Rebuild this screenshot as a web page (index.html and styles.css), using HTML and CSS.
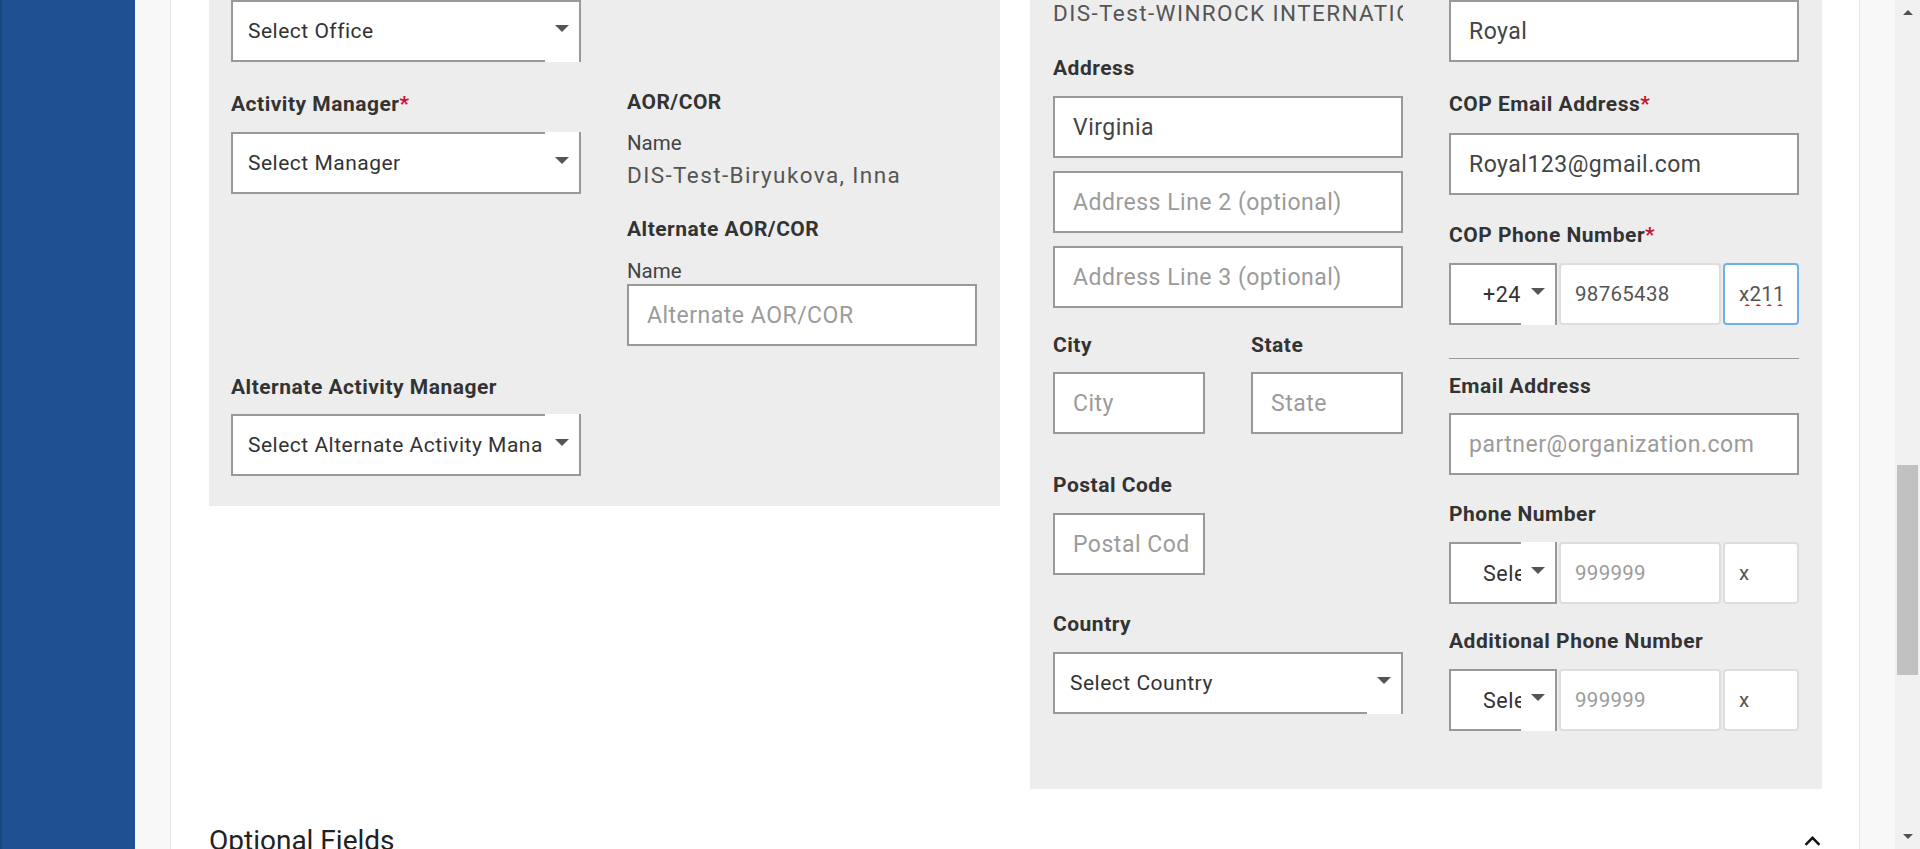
FILE: index.html
```html
<!DOCTYPE html>
<html lang="en">
<head>
<meta charset="utf-8">
<title>Activity Form</title>
<link rel="stylesheet" href="styles.css">
</head>
<body>
<div class="app">
  <aside class="sidebar"></aside>
  <main class="main">
    <div class="card">
      <div class="panels">
        <section class="panel panel-left">
          <div class="row">
            <div class="col">
              <div class="select sel-bottom"><span class="select-text">Select Office</span><span class="caret-box"><span class="caret"></span></span></div>
            </div>
          </div>
          <div class="row row-2">
            <div class="col">
              <label class="label label-manager">Activity Manager<span class="req">*</span></label>
              <div class="select sel-top"><span class="select-text">Select Manager</span><span class="caret-box"><span class="caret"></span></span></div>
            </div>
            <div class="col">
              <h4 class="label label-plain">AOR/COR</h4>
              <div class="sublabel">Name</div>
              <div class="static static-name">DIS-Test-Biryukova, Inna</div>
              <h4 class="label label-plain label-alt">Alternate AOR/COR</h4>
              <div class="sublabel sublabel-alt">Name</div>
              <input class="input input-alt" type="text" placeholder="Alternate AOR/COR">
            </div>
          </div>
          <div class="row row-3">
            <div class="col">
              <label class="label">Alternate Activity Manager</label>
              <div class="select sel-top"><span class="select-text">Select Alternate Activity Manager</span><span class="caret-box"><span class="caret"></span></span></div>
            </div>
          </div>
        </section>

        <section class="panel panel-right">
          <div class="col">
            <div class="static static-org">DIS-Test-WINROCK INTERNATIONAL</div>
            <label class="label label-address">Address</label>
            <input class="input" type="text" value="Virginia">
            <input class="input input-next" type="text" placeholder="Address Line 2 (optional)">
            <input class="input input-next" type="text" placeholder="Address Line 3 (optional)">
            <div class="pair">
              <div class="pair-item">
                <label class="label label-pair">City</label>
                <input class="input" type="text" placeholder="City">
              </div>
              <div class="pair-item">
                <label class="label label-pair">State</label>
                <input class="input" type="text" placeholder="State">
              </div>
            </div>
            <div class="pair pair-single">
              <div class="pair-item">
                <label class="label">Postal Code</label>
                <input class="input" type="text" placeholder="Postal Code">
              </div>
            </div>
            <label class="label label-country">Country</label>
            <div class="select sel-bottom"><span class="select-text">Select Country</span><span class="caret-box"><span class="caret"></span></span></div>
          </div>

          <div class="col">
            <input class="input" type="text" value="Royal">
            <label class="label label-cop-email">COP Email Address<span class="req">*</span></label>
            <input class="input" type="text" value="Royal123@gmail.com">
            <label class="label label-cop-phone">COP Phone Number<span class="req">*</span></label>
            <div class="phone">
              <div class="select phone-sel sel-bottom"><span class="select-text">+24</span><span class="caret-box"><span class="caret"></span></span></div>
              <input class="input input-soft phone-num" type="text" value="98765438">
              <input class="input input-soft input-focus phone-ext" type="text" value="x211">
            </div>
            <hr class="divider">
            <label class="label label-email">Email Address</label>
            <input class="input" type="text" placeholder="partner@organization.com">
            <label class="label label-phone">Phone Number</label>
            <div class="phone">
              <div class="select phone-sel sel-top"><span class="select-text">Select</span><span class="caret-box"><span class="caret"></span></span></div>
              <input class="input input-soft phone-num" type="text" placeholder="999999">
              <input class="input input-soft phone-ext" type="text" placeholder="x">
            </div>
            <label class="label label-add-phone">Additional Phone Number</label>
            <div class="phone">
              <div class="select phone-sel sel-bottom"><span class="select-text">Select</span><span class="caret-box"><span class="caret"></span></span></div>
              <input class="input input-soft phone-num" type="text" placeholder="999999">
              <input class="input input-soft phone-ext" type="text" placeholder="x">
            </div>
          </div>
        </section>
      </div>

      <div class="optional">
        <h3 class="optional-title">Optional Fields</h3>
        <svg class="chevron" width="17" height="10" viewBox="0 0 17 10" aria-hidden="true"><polyline points="1.5,8.8 8.5,1.8 15.5,8.8" fill="none" stroke="#111" stroke-width="2.4"/></svg>
      </div>
    </div>
  </main>
  <div class="scrollbar">
    <div class="sb-btn"><span class="sb-up"></span></div>
    <div class="sb-track"><div class="sb-thumb"></div></div>
    <div class="sb-btn"><span class="sb-down"></span></div>
  </div>
</div>
</body>
</html>
```

FILE: styles.css
```css
* { box-sizing: border-box; }
html, body { margin: 0; padding: 0; }
body {
  font-family: Roboto, "Liberation Sans", Arial, sans-serif;
  color: #333;
  background: #f8f8f8;
  overflow: hidden;
}
.app { display: flex; height: 849px; overflow: hidden; }

.sidebar {
  width: 135px;
  flex: none;
  background: #1f5190;
  border-left: 2px solid #1a467e;
}

.main {
  flex: 1;
  min-width: 0;
  background: #f8f8f8;
  padding: 0 35px;
  display: flex;
}
.card {
  flex: 1;
  min-width: 0;
  background: #fff;
  border-left: 1px solid #e6e6e6;
  border-right: 1px solid #e6e6e6;
  padding: 0 37px 0 38px;
}

.panels { display: flex; gap: 30px; align-items: flex-start; }
.panel { background: #ededed; }
.panel-left { width: 791px; flex: none; padding: 0 23px 30px 22px; }
.panel-right { width: 792px; flex: none; padding: 0 23px 58px 23px; display: flex; gap: 46px; }

.row { display: flex; gap: 46px; }
.row-2 { margin-top: 26px; }
.row-3 { margin-top: 27px; }
.col { width: 350px; flex: none; min-width: 0; display: flex; flex-direction: column; }

.label {
  display: block;
  margin: 0 0 16px;
  font-size: 21px;
  line-height: 28px;
  font-weight: 700;
  letter-spacing: .5px;
  color: #333;
}
.label-plain { margin-bottom: 0; }
.label-manager { margin-top: 2px; margin-bottom: 14px; }
.req { color: #c8102e; font-weight: 700; letter-spacing: 0; }
.row-3 .label { margin-bottom: 13px; }

.sublabel {
  margin-top: 14px;
  font-size: 20.5px;
  line-height: 26px;
  color: #444;
}
.sublabel-alt { margin-top: 15px; }
.label-alt { margin-top: 25px; }
.input-alt { margin-top: 5px; }

.static {
  font-size: 22.5px;
  letter-spacing: 1.4px;
  color: #555;
  white-space: nowrap;
  overflow: hidden;
}
.static-name { margin-top: 4px; line-height: 30px; }
.static-org { line-height: 26px; }

.select {
  position: relative;
  height: 62px;
  border: 2px solid #999;
  background: #fff;
  display: flex;
  align-items: center;
  padding: 0 36px 0 15px;
  font-size: 21px;
  letter-spacing: .5px;
  color: #333;
}
.select-text { white-space: nowrap; overflow: hidden; }
.caret-box {
  position: absolute;
  right: 0;
  width: 34px;
  background: #fff;
  display: flex;
  justify-content: center;
  align-items: flex-start;
}
.sel-top .caret-box { top: -2px; bottom: 2px; padding-top: 25px; }
.sel-bottom .caret-box { top: 0; bottom: -2px; padding-top: 23px; }
.caret {
  width: 0; height: 0;
  border-left: 7px solid transparent;
  border-right: 7px solid transparent;
  border-top: 7px solid #555;
}

.input {
  display: block;
  width: 100%;
  height: 62px;
  margin: 0;
  border: 2px solid #999;
  border-radius: 0;
  background: #fff;
  padding: 0 12px 0 18px;
  font-family: inherit;
  font-size: 23px;
  letter-spacing: .5px;
  color: #444;
  outline: none;
}
.input::placeholder { color: #9b9b9b; opacity: 1; }
.input-next { margin-top: 13px; }

.label-address { margin-top: 28px; margin-bottom: 14px; }
.pair { display: grid; grid-template-columns: 152px 152px; column-gap: 46px; margin-top: 23px; }
.pair-single { margin-top: 37px; }
.pair-item { min-width: 0; }
.label-pair { margin-bottom: 13px; }
.pair-single .label { margin-bottom: 14px; }
.label-country { margin-top: 35px; margin-bottom: 14px; }

.label-cop-email { margin-top: 28px; margin-bottom: 15px; }
.label-cop-phone { margin-top: 26px; margin-bottom: 14px; }
.label-email { margin-top: 13px; margin-bottom: 13px; }
.label-phone { margin-top: 25px; margin-bottom: 14px; }
.label-add-phone { margin-top: 23px; margin-bottom: 14px; }

.divider { height: 1px; border: 0; margin: 33px 0 0; background: #9a9a9a; }

.phone { display: flex; gap: 2px; }
.phone-sel { width: 108px; flex: none; padding-left: 32px; padding-right: 34px; font-size: 21.5px; color: #333; }
.input-soft {
  border-color: #ddd;
  border-radius: 4px;
  font-size: 20.5px;
  letter-spacing: .3px;
  padding: 0 8px 0 14px;
  color: #555;
}
.input-soft::placeholder { color: #9b9b9b; }
.phone-num { width: 162px; flex: none; }
.phone-ext { width: 76px; flex: none; }
.phone-ext::placeholder { color: #555; }
.input-focus {
  border-color: #6fb0e8;
  text-decoration: underline wavy #e3141b;
  text-decoration-thickness: 1.5px;
  text-underline-offset: 3px;
}

.optional {
  margin-top: 35px;
  display: flex;
  align-items: center;
  justify-content: space-between;
  padding-right: 1px;
}
.optional-title {
  margin: 0;
  font-size: 28px;
  line-height: 34px;
  font-weight: 400;
  color: #222;
}
.chevron { display: block; }

.scrollbar {
  width: 25px;
  flex: none;
  background: #f1f1f1;
  display: flex;
  flex-direction: column;
}
.sb-btn { height: 25px; flex: none; display: flex; align-items: center; justify-content: center; }
.sb-up { width: 0; height: 0; border-left: 5px solid transparent; border-right: 5px solid transparent; border-bottom: 5px solid #505050; }
.sb-down { width: 0; height: 0; border-left: 5px solid transparent; border-right: 5px solid transparent; border-top: 5px solid #505050; }
.sb-track { flex: 1; padding: 440px 2px 0; }
.sb-thumb { height: 210px; background: #c1c1c1; }
```
